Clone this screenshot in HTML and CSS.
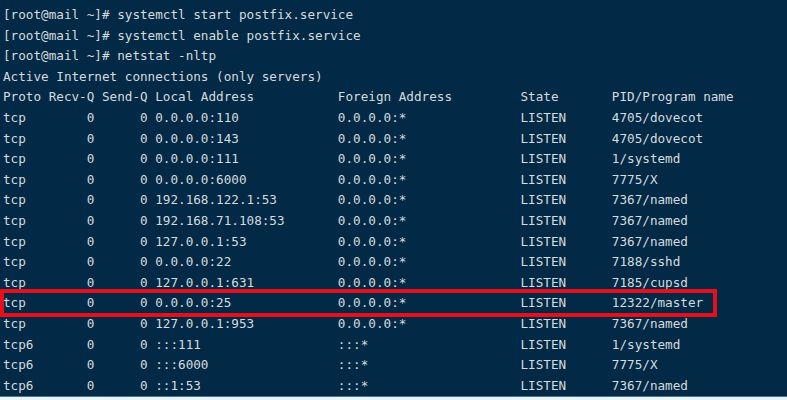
FILE: index.html
```html
<!DOCTYPE html>
<html lang="en">
<head>
    <meta charset="UTF-8">
    <meta name="viewport" content="width=device-width, initial-scale=1.0">
    <title>netstat -nltp</title>
    <link rel="stylesheet" href="styles.css">
</head>
<body>
    <!-- Terminal window -->
    <div class="terminal">
        <div class="line">[root@mail ~]# systemctl start postfix.service</div>
        <div class="line">[root@mail ~]# systemctl enable postfix.service</div>
        <div class="line">[root@mail ~]# netstat -nltp</div>
        <div class="line">Active Internet connections (only servers)</div>
        <div class="line">Proto Recv-Q Send-Q Local Address           Foreign Address         State       PID/Program name</div>
        <div class="line">tcp        0      0 0.0.0.0:110             0.0.0.0:*               LISTEN      4705/dovecot</div>
        <div class="line">tcp        0      0 0.0.0.0:143             0.0.0.0:*               LISTEN      4705/dovecot</div>
        <div class="line">tcp        0      0 0.0.0.0:111             0.0.0.0:*               LISTEN      1/systemd</div>
        <div class="line">tcp        0      0 0.0.0.0:6000            0.0.0.0:*               LISTEN      7775/X</div>
        <div class="line">tcp        0      0 192.168.122.1:53        0.0.0.0:*               LISTEN      7367/named</div>
        <div class="line">tcp        0      0 192.168.71.108:53       0.0.0.0:*               LISTEN      7367/named</div>
        <div class="line">tcp        0      0 127.0.0.1:53            0.0.0.0:*               LISTEN      7367/named</div>
        <div class="line">tcp        0      0 0.0.0.0:22              0.0.0.0:*               LISTEN      7188/sshd</div>
        <div class="line">tcp        0      0 127.0.0.1:631           0.0.0.0:*               LISTEN      7185/cupsd</div>
        <div class="line marked">tcp        0      0 0.0.0.0:25              0.0.0.0:*               LISTEN      12322/master</div>
        <div class="line">tcp        0      0 127.0.0.1:953           0.0.0.0:*               LISTEN      7367/named</div>
        <div class="line">tcp6       0      0 :::111                  :::*                    LISTEN      1/systemd</div>
        <div class="line">tcp6       0      0 :::6000                 :::*                    LISTEN      7775/X</div>
        <div class="line">tcp6       0      0 ::1:53                  :::*                    LISTEN      7367/named</div>
    </div>
</body>
</html>
```

FILE: styles.css
```css
* {
    margin: 0;
    padding: 0;
    box-sizing: border-box;
}

body {
    background-color: #e6f7fb;
    height: 400px;
    overflow: hidden;
}

.terminal {
    height: 397px;
    background-color: #022945;
    border-bottom: 1px solid #5b7280;
    padding: 5px 0 0 3px;
    font-family: "DejaVu Sans Mono", "Liberation Mono", monospace;
    font-size: 12.65px;
    color: #d6dbde;
}

.line {
    white-space: pre;
    height: 20.6px;
    line-height: 20.6px;
}

/* red box drawn round the postfix row */
.marked {
    position: relative;
}

.marked::after {
    content: "";
    position: absolute;
    box-sizing: border-box;
    left: -3px;
    top: -4px;
    width: 717px;
    height: 28px;
    border: 4px solid #e5101a;
}
```
